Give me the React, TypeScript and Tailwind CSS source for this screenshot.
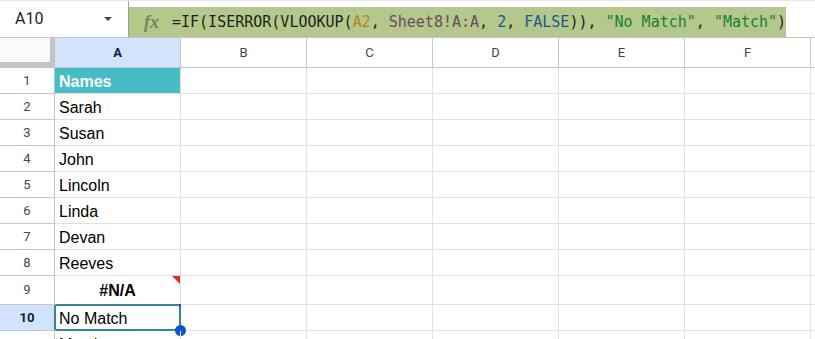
import React from 'react'

const cols = ['A', 'B', 'C', 'D', 'E', 'F']

const rows: { n: number; text: string; h: string; kind?: 'head' | 'err' | 'sel' }[] = [
  { n: 1, text: 'Names', h: 'h-[26px]', kind: 'head' },
  { n: 2, text: 'Sarah', h: 'h-[26px]' },
  { n: 3, text: 'Susan', h: 'h-[26px]' },
  { n: 4, text: 'John', h: 'h-[26px]' },
  { n: 5, text: 'Lincoln', h: 'h-[26px]' },
  { n: 6, text: 'Linda', h: 'h-[26px]' },
  { n: 7, text: 'Devan', h: 'h-[26px]' },
  { n: 8, text: 'Reeves', h: 'h-[26px]' },
  { n: 9, text: '#N/A', h: 'h-[29px]', kind: 'err' },
  { n: 10, text: 'No Match', h: 'h-[26px]', kind: 'sel' },
  { n: 11, text: 'Match', h: 'h-[26px]' },
]

function FormulaBar() {
  return (
    <div className="flex h-[38px] border-b border-[#c4c7c5] border-t border-t-[#e8e8e8]">
      <div className="w-[129px] flex items-center justify-between pl-[15px] pr-[16px] border-r border-[#9aa58a] text-[16px] text-[#1f1f1f]" style={{ fontFamily: 'Roboto, sans-serif' }}>
        <span>A10</span>
        <span className="w-0 h-0 border-l-[4px] border-r-[4px] border-t-[4px] border-l-transparent border-r-transparent border-t-[#444746]" />
      </div>
      <div className="w-[657px] mt-[6px] bg-[#b3c88a] flex items-center">
        <span className="ml-[15px] mr-[13px] italic font-bold text-[18px] text-[#75845f]" style={{ fontFamily: '"Liberation Serif", serif' }}>
          fx
        </span>
        <span className="text-[15px] whitespace-pre text-[#1f1f1f]" style={{ fontFamily: '"DejaVu Sans Mono", monospace' }}>
          =IF(ISERROR(VLOOKUP(<span className="text-[#b9851a]">A2</span>, <span className="text-[#6d4a62]">Sheet8!A:A</span>, <span className="text-[#1f5590]">2</span>, <span className="text-[#1f5590]">FALSE</span>)), <span className="text-[#188038]">"No Match"</span>, <span className="text-[#188038]">"Match"</span>)
        </span>
      </div>
      <div className="flex-1" />
    </div>
  )
}

function ColumnHeader() {
  return (
    <div className="flex h-[30px]">
      <div className="w-[55px] h-[30px] bg-[#c4c4c4] border-b border-[#c4c7c5]">
        <div className="w-[50px] h-[24px] bg-[#f8f9fa]" />
      </div>
      {cols.map((c) => (
        <div
          key={c}
          className={
            c === 'A'
              ? 'w-[126px] flex items-center justify-center bg-[#d3e3fd] border-r border-b border-[#c4c7c5] text-[13px] font-bold text-[#041e49]'
              : 'w-[126px] flex items-center justify-center bg-white border-r border-b border-[#c4c7c5] text-[13px] text-[#444746]'
          }
        >
          {c}
        </div>
      ))}
      <div className="flex-1 border-b border-[#c4c7c5]" />
    </div>
  )
}

export default function App() {
  return (
    <div className="w-[815px] h-[339px] overflow-hidden bg-white" style={{ fontFamily: 'Roboto, "Liberation Sans", sans-serif' }}>
      <FormulaBar />
      <ColumnHeader />
      {rows.map((r) => (
        <div key={r.n} className={`flex ${r.h}`}>
          <div
            className={
              r.kind === 'sel'
                ? 'w-[55px] flex items-center justify-center bg-[#d3e3fd] border-r border-b border-[#c4c7c5] text-[13px] font-bold text-[#041e49]'
                : 'w-[55px] flex items-center justify-center bg-white border-r border-b border-[#c4c7c5] text-[13px] text-[#444746]'
            }
          >
            {r.n}
          </div>
          <div
            className={
              r.kind === 'head'
                ? 'relative w-[126px] flex items-end pb-[1px] pl-[4px] bg-[#46bdc6] border-r border-b border-[#e1e1e1] text-[16px] font-bold text-white'
                : r.kind === 'err'
                ? 'relative w-[126px] flex items-end justify-center pb-[3px] border-r border-b border-[#e1e1e1] text-[16px] font-bold text-black'
                : 'relative w-[126px] flex items-end pb-[1px] pl-[4px] border-r border-b border-[#e1e1e1] text-[16px] text-black'
            }
            style={{ fontFamily: '"Liberation Sans", Arial, sans-serif' }}
          >
            <span className="leading-[20px]">{r.text}</span>
            {r.kind === 'err' && (
              <span className="absolute top-0 right-0 w-0 h-0 border-r-[8px] border-b-[8px] border-r-[#d93025] border-b-transparent" />
            )}
            {r.kind === 'sel' && (
              <>
                <span className="absolute -left-[1px] -top-[1px] -right-[1px] -bottom-[1px] border-[2.5px] border-[#3b8294] rounded-[3px]" />
                <span className="absolute -right-[1px] -top-[1px] w-[2px] h-[3px] bg-[#0b57d0]" />
                <span className="absolute -right-[6px] -bottom-[6px] w-[11px] h-[11px] rounded-full bg-[#0b57d0]" />
              </>
            )}
          </div>
          {cols.slice(1).map((c) => (
            <div key={c} className="w-[126px] border-r border-b border-[#e1e1e1]" />
          ))}
          <div className="flex-1 border-b border-[#e1e1e1]" />
        </div>
      ))}
    </div>
  )
}
